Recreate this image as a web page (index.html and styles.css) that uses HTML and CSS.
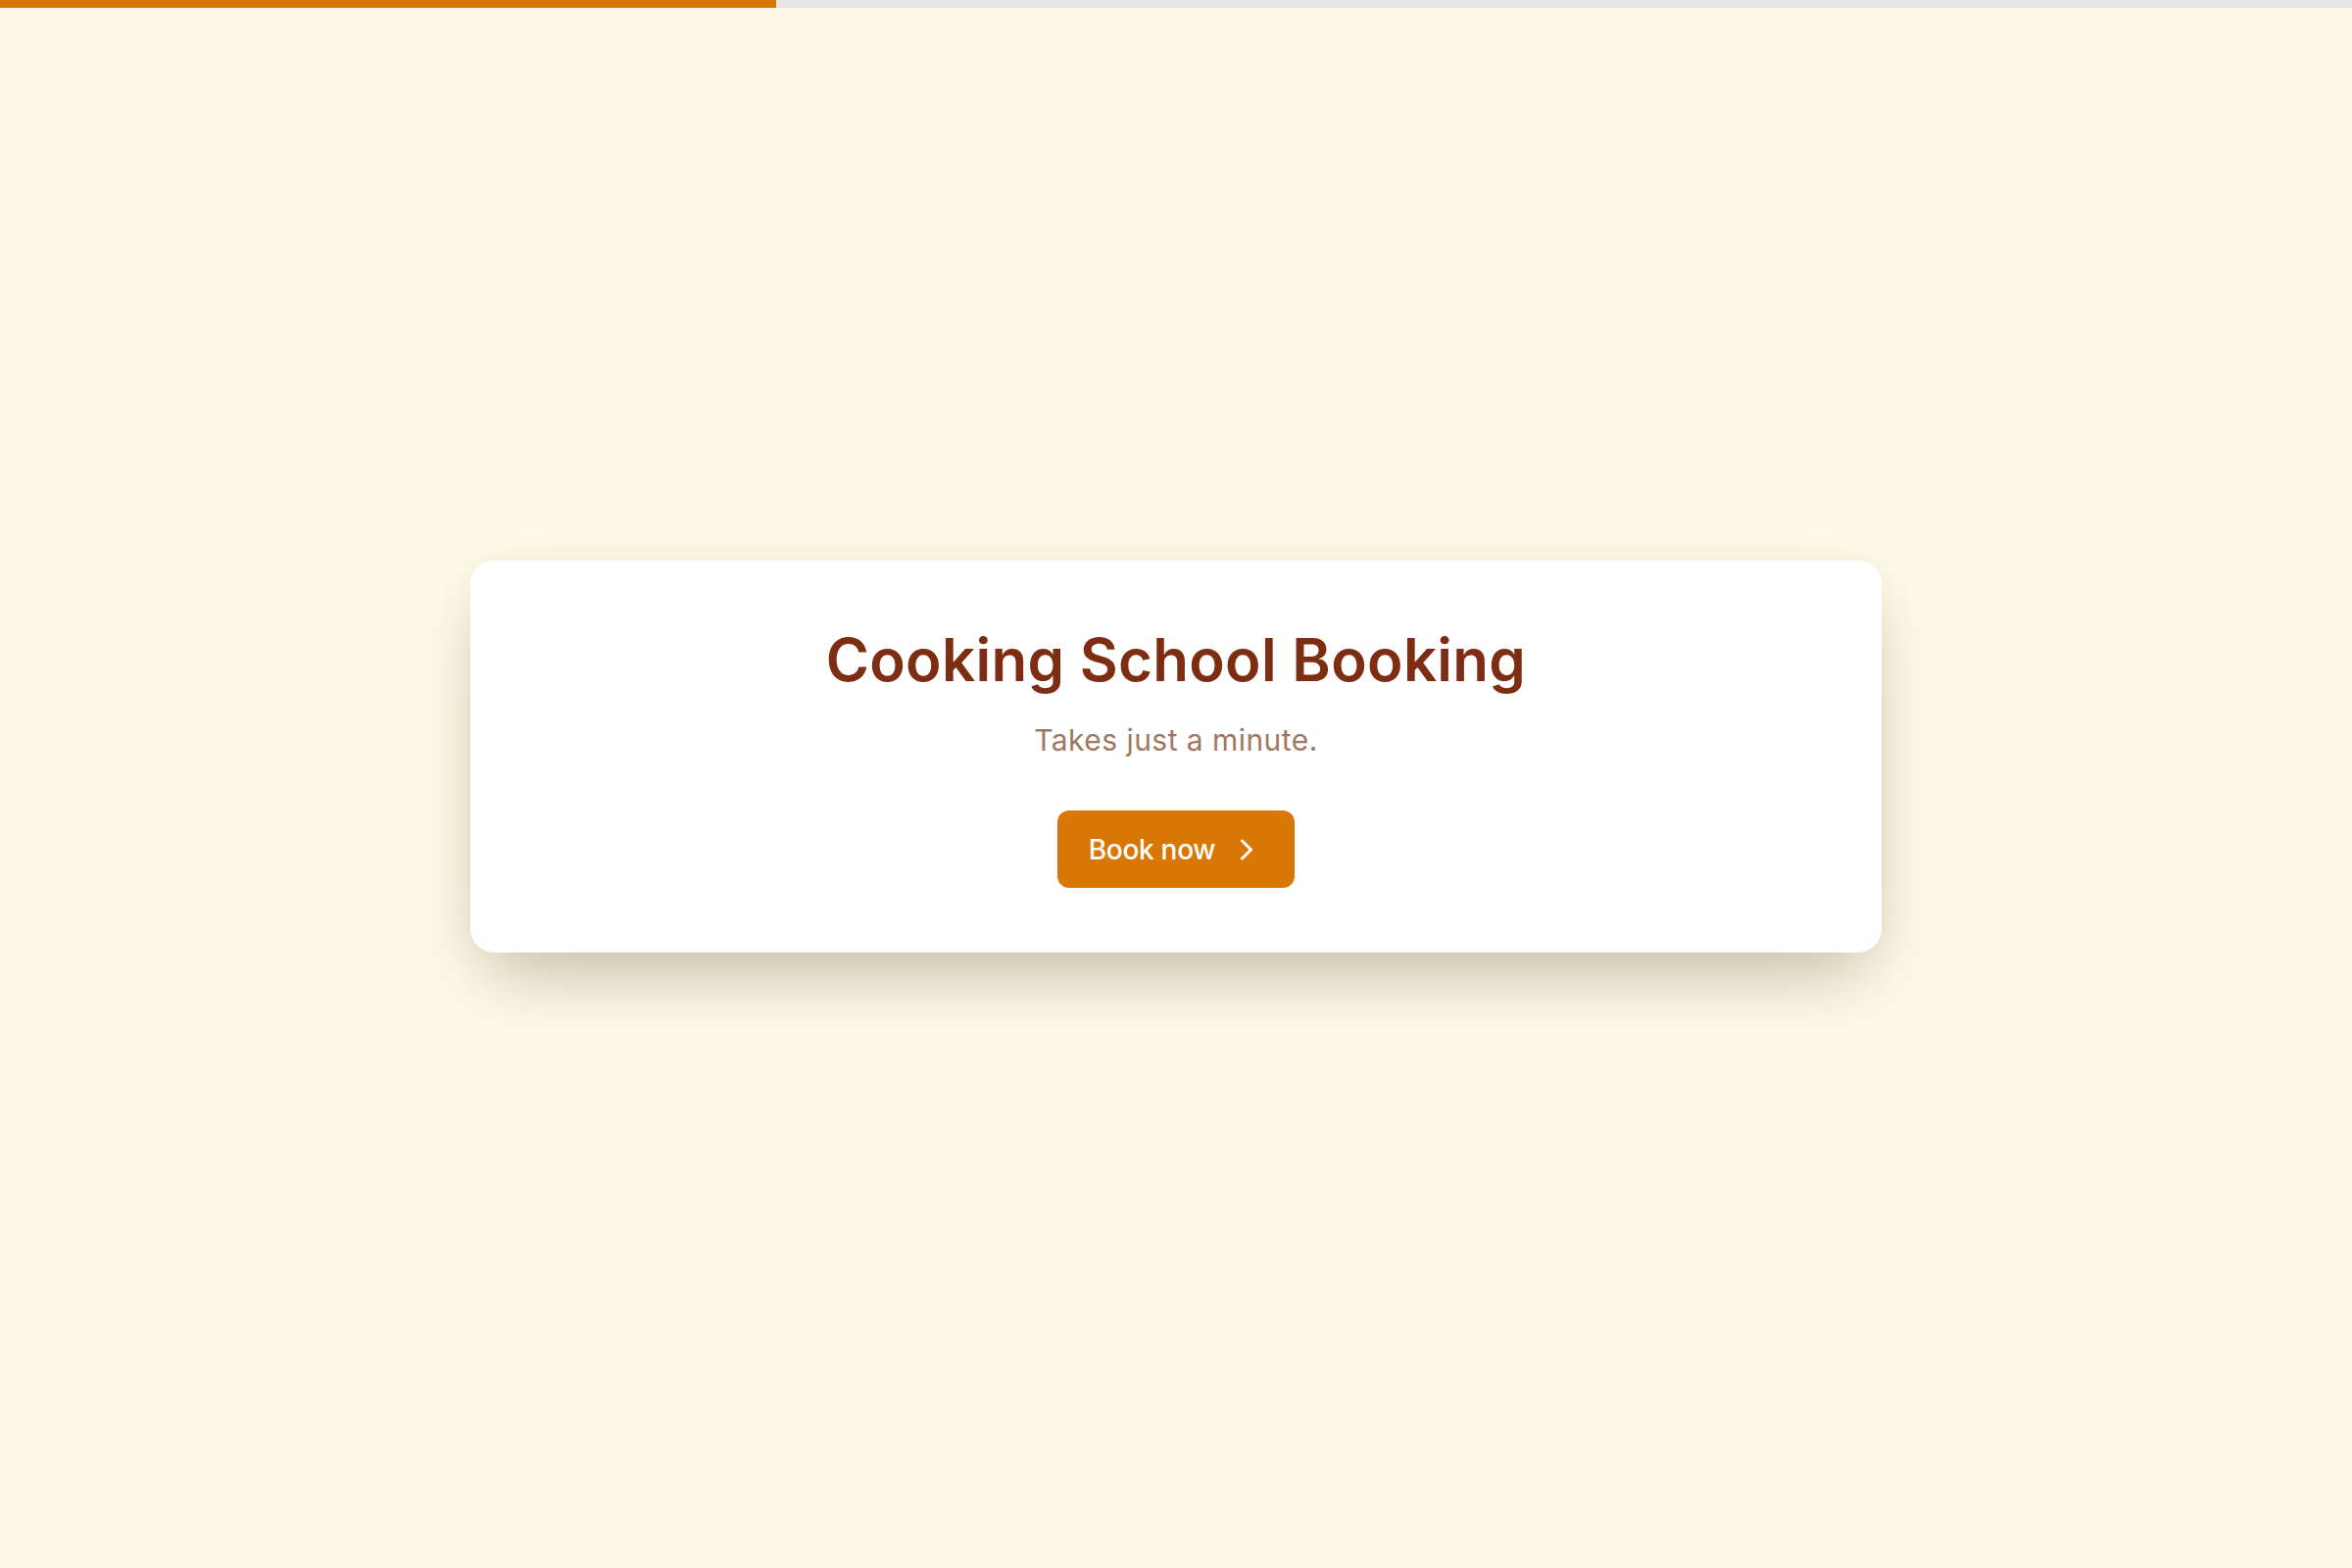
FILE: index.html
```html
<!DOCTYPE html>
<html lang="en">
<head>
<meta charset="utf-8">
<title>Cooking School Booking</title>
<link rel="stylesheet" href="styles.css">
</head>
<body>
  <div class="progress"><div class="progress-fill" style="width: 33%"></div></div>
  <main class="stage">
    <section class="card">
      <h1 class="title">Cooking School Booking</h1>
      <p class="subtitle">Takes just a minute.</p>
      <button class="btn" type="button">
        <span>Book now</span>
        <svg class="btn-icon" viewBox="0 0 24 24" fill="none" stroke="currentColor" stroke-width="2" stroke-linecap="round" stroke-linejoin="round" aria-hidden="true"><path d="m9 18 6-6-6-6"/></svg>
      </button>
    </section>
  </main>
</body>
</html>
```
FILE: styles.css
```css
* { box-sizing: border-box; }
html, body { margin: 0; padding: 0; }
body {
  background: #fefae8;
  font-family: Inter, "Noto Sans", sans-serif;
  min-height: 100vh;
}
.progress {
  height: 8px;
  background: #e5e5e7;
}
.progress-fill {
  height: 100%;
  background: #d97706;
}
.stage {
  min-height: calc(100vh - 8px);
  display: flex;
  align-items: center;
  justify-content: center;
  padding-bottom: 64px;
}
.card {
  width: 1440px;
  background: #ffffff;
  border-radius: 24px;
  padding: 65px 48px 66px;
  display: flex;
  flex-direction: column;
  align-items: center;
  box-shadow: 0 37px 75px -18px rgba(60, 50, 20, 0.3), 0 0 40px rgba(120, 100, 40, 0.06);
}
.title {
  margin: 0;
  font-size: 60px;
  line-height: 72px;
  font-weight: 600;
  color: #7c2d12;
  letter-spacing: 0.005em;
}
.subtitle {
  margin: 24px 0 0;
  font-size: 30px;
  line-height: 45px;
  font-weight: 400;
  color: #a07862;
  letter-spacing: 0.015em;
}
.btn {
  margin-top: 49px;
  display: flex;
  align-items: center;
  gap: 14px;
  height: 79px;
  padding: 0 31px 0 32px;
  border: none;
  border-radius: 12px;
  background: #d97706;
  color: #ffffff;
  font-family: inherit;
  font-size: 28px;
  font-weight: 500;
  letter-spacing: -0.01em;
  cursor: pointer;
}
.btn-icon {
  width: 36px;
  height: 36px;
  stroke-width: 2;
}
```
